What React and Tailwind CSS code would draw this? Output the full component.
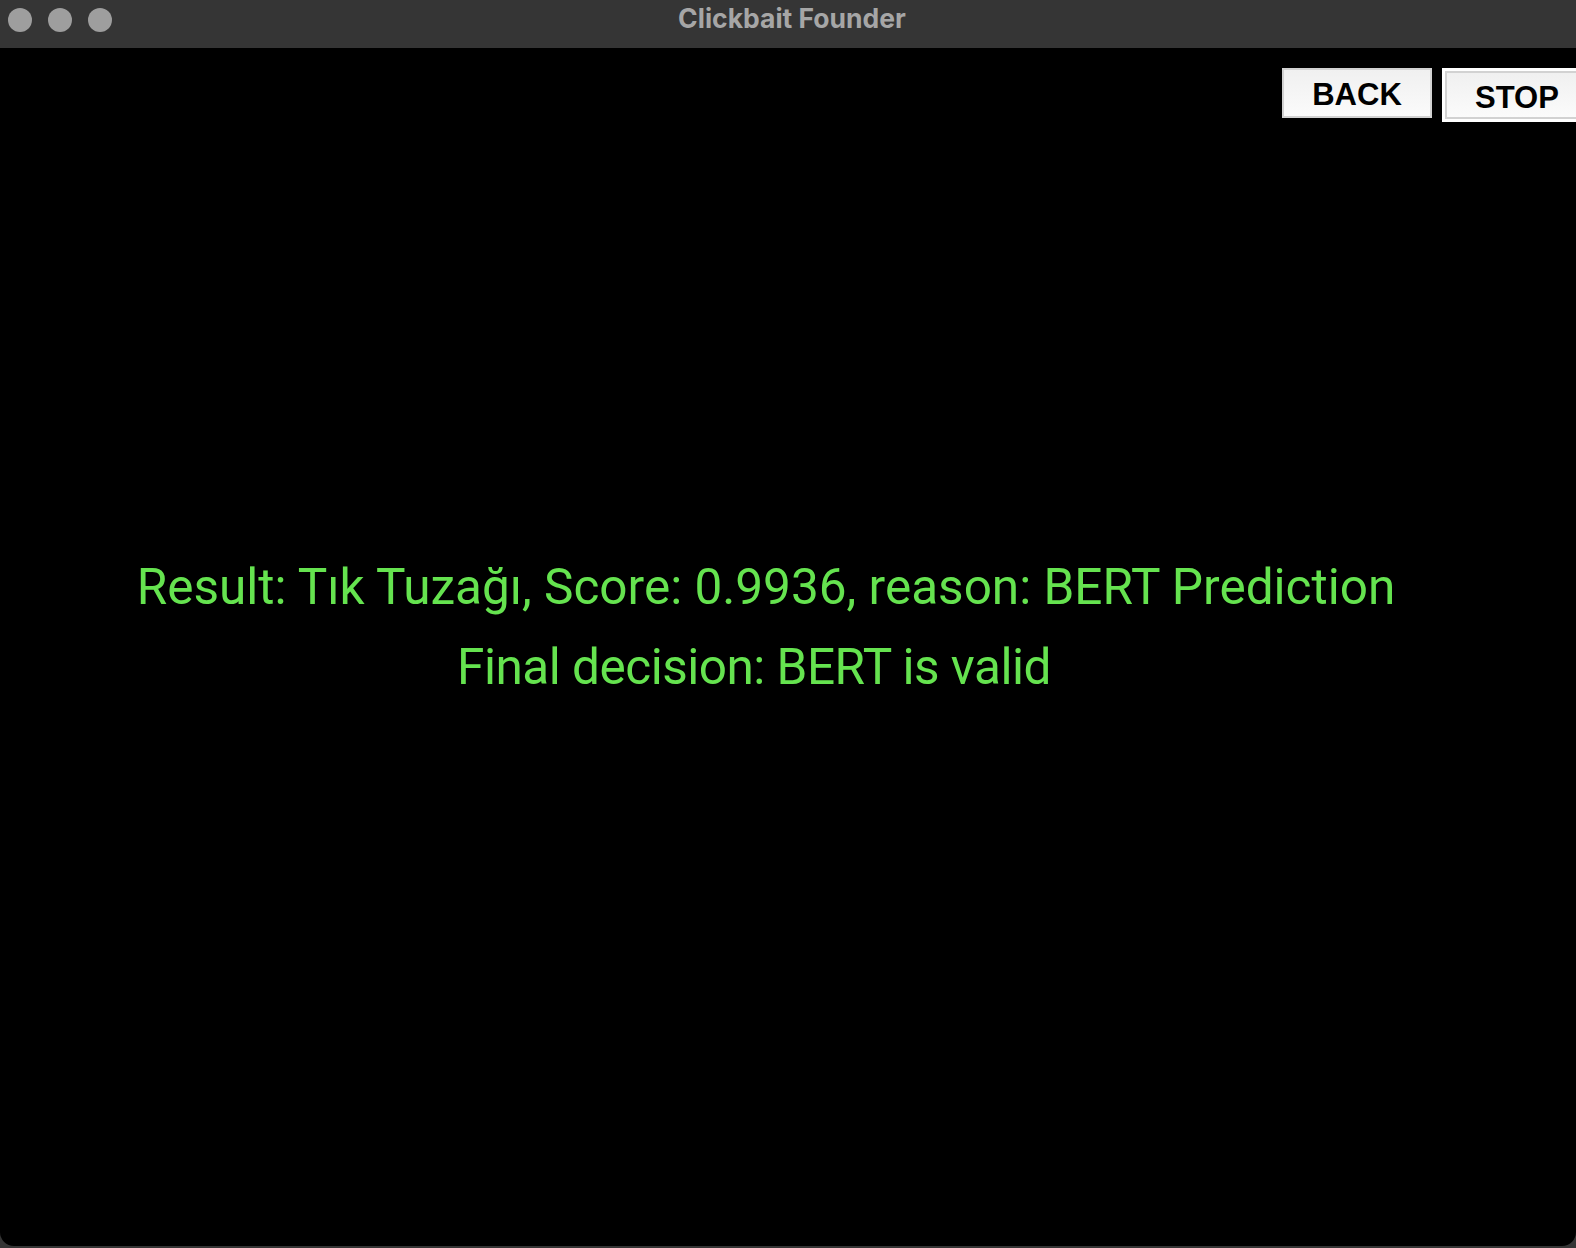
export default function App() {
  return (
    <div className="w-[1576px] h-[1248px] bg-[#353535] flex flex-col overflow-hidden">
      <div className="h-[48px] shrink-0 relative flex items-center justify-center">
        <div className="absolute left-[8px] top-[8px] flex gap-[16px]">
          <div className="w-[24px] h-[24px] rounded-full bg-[#9e9e9e]" />
          <div className="w-[24px] h-[24px] rounded-full bg-[#9e9e9e]" />
          <div className="w-[24px] h-[24px] rounded-full bg-[#9e9e9e]" />
        </div>
        <span
          className="text-[26.5px] font-bold text-[#a6a6a6] leading-none pb-[12px] pl-[8px]"
          style={{ fontFamily: "Inter, 'Noto Sans', sans-serif" }}
        >
          Clickbait Founder
        </span>
      </div>
      <div className="flex-1 bg-black rounded-bl-[14px] rounded-br-[14px] mb-[2px] overflow-hidden flex flex-col">
        <div
          className="flex justify-end items-start gap-[10px] pt-[20px] mr-[-22px]"
          style={{ fontFamily: "'Liberation Sans', Arial, sans-serif" }}
        >
          <button className="w-[150px] h-[50px] border-2 border-[#d2d2d2] bg-gradient-to-b from-[#f0f0f0] to-[#fbfbfb] text-black text-[31px] font-bold leading-none flex items-center justify-center pt-[2px]">
            BACK
          </button>
          <div className="border-[3px] border-white">
            <button className="w-[150px] h-[48px] border-2 border-[#d2d2d2] bg-gradient-to-b from-[#f0f0f0] to-[#fbfbfb] text-black text-[31px] font-bold leading-none flex items-center justify-start pl-[28px] pt-[4px]">
              STOP
            </button>
          </div>
        </div>
        <div
          className="mt-[425px] flex flex-col items-center text-[#65e34f] text-[49.5px] leading-[80px]"
          style={{ fontFamily: "Roboto, Inter, sans-serif" }}
        >
          <div className="pr-[44px]">Result: Tık Tuzağı, Score: 0.9936, reason: BERT Prediction</div>
          <div className="pr-[68px] tracking-[-0.5px]">Final decision: BERT is valid</div>
        </div>
      </div>
    </div>
  );
}
